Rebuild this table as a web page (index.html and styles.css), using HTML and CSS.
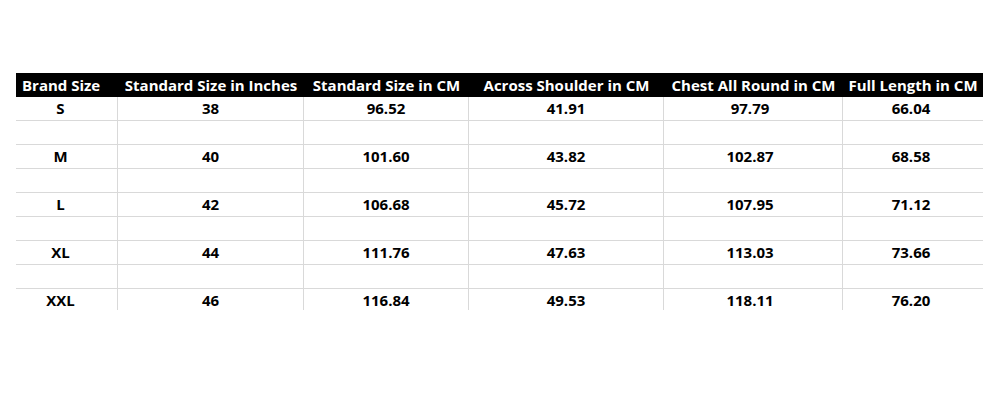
FILE: index.html
```html
<!DOCTYPE html>
<html>
<head>
<meta charset="utf-8">
<link rel="stylesheet" href="styles.css">
</head>
<body>
<div class="sheet">
  <div class="hd first">Brand Size</div>
  <div class="hd">Standard Size in Inches</div>
  <div class="hd">Standard Size in CM</div>
  <div class="hd">Across Shoulder in CM</div>
  <div class="hd">Chest All Round in CM</div>
  <div class="hd">Full Length in CM</div>

  <div class="c c1">S</div><div class="c">38</div><div class="c">96.52</div><div class="c">41.91</div><div class="c c5">97.79</div><div class="c c6">66.04</div>
  <div class="c c1"></div><div class="c"></div><div class="c"></div><div class="c"></div><div class="c c5"></div><div class="c c6"></div>
  <div class="c c1">M</div><div class="c">40</div><div class="c">101.60</div><div class="c">43.82</div><div class="c c5">102.87</div><div class="c c6">68.58</div>
  <div class="c c1"></div><div class="c"></div><div class="c"></div><div class="c"></div><div class="c c5"></div><div class="c c6"></div>
  <div class="c c1">L</div><div class="c">42</div><div class="c">106.68</div><div class="c">45.72</div><div class="c c5">107.95</div><div class="c c6">71.12</div>
  <div class="c c1"></div><div class="c"></div><div class="c"></div><div class="c"></div><div class="c c5"></div><div class="c c6"></div>
  <div class="c c1">XL</div><div class="c">44</div><div class="c">111.76</div><div class="c">47.63</div><div class="c c5">113.03</div><div class="c c6">73.66</div>
  <div class="c c1"></div><div class="c"></div><div class="c"></div><div class="c"></div><div class="c c5"></div><div class="c c6"></div>
  <div class="c c1">XXL</div><div class="c">46</div><div class="c">116.84</div><div class="c">49.53</div><div class="c c5">118.11</div><div class="c c6">76.20</div>
</div>
</body>
</html>
```

FILE: styles.css
```css
html, body {
  margin: 0;
  padding: 0;
  background: #ffffff;
}

body {
  font-family: "Open Sans", "Liberation Sans", sans-serif;
  font-weight: 700;
  font-size: 15px;
  color: #000000;
}

.sheet {
  margin: 73px 0 0 16px;
  width: 967px;
  height: 237px;
  overflow: hidden;
  display: grid;
  grid-template-columns: 102px 186px 165px 195px 179px 140px;
  grid-auto-rows: 24px;
}

.hd {
  background: #000000;
  color: #ffffff;
  text-align: center;
  line-height: 24px;
  white-space: nowrap;
}

.hd.first {
  text-align: left;
  padding-left: 6px;
}

.c {
  box-sizing: border-box;
  border-bottom: 1px solid #d9d9d9;
  border-right: 1px solid #d9d9d9;
  text-align: center;
  line-height: 23px;
}

.c1 {
  padding-right: 12px;
}

.c5 {
  padding-right: 6px;
}

.c6 {
  border-right: none;
  padding-right: 4px;
}
```
